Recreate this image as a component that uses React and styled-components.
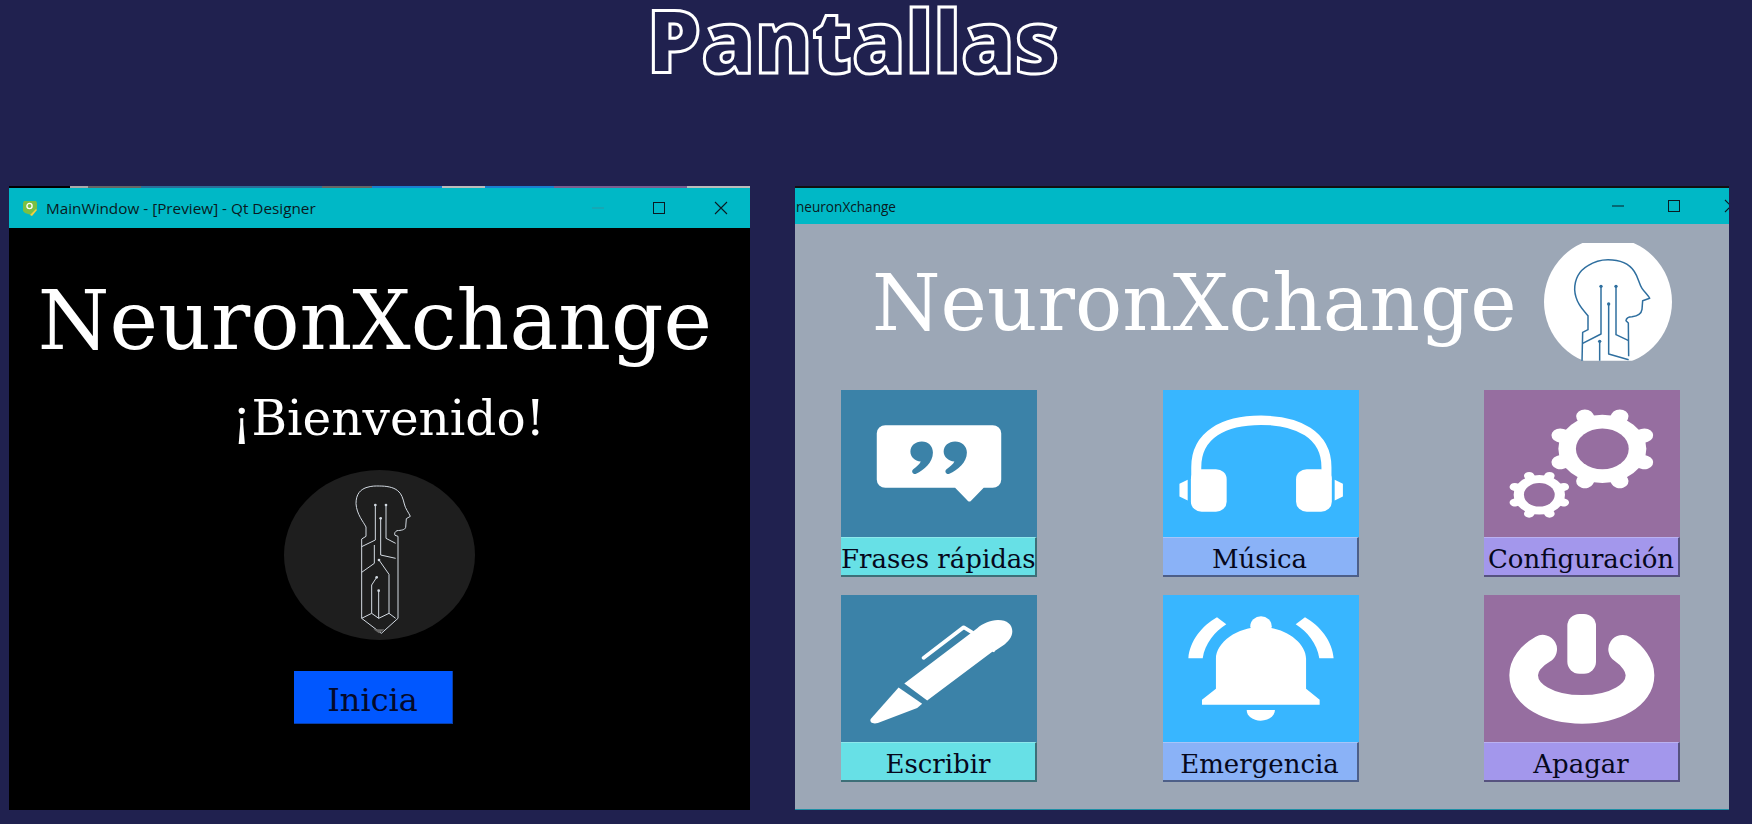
import React from "react";
import styled, { createGlobalStyle } from "styled-components";

const serif = `"DejaVu Serif", "Liberation Serif", serif`;

const GlobalStyle = createGlobalStyle`
  html, body {
    margin: 0;
    padding: 0;
    background: #20214f;
    overflow: hidden;
  }
`;

const Page = styled.div`
  width: 1752px;
  height: 824px;
  background: #20214f;
  display: flex;
  flex-direction: column;
  overflow: hidden;
`;

const Heading = styled.h1`
  margin: 0;
  height: 186px;
  padding-right: 46px;
  box-sizing: border-box;
  text-align: center;
  font-family: "Open Sans", "Noto Sans", sans-serif;
  font-weight: 800;
  font-size: 86px;
  line-height: 80px;
  color: #20214f;
  -webkit-text-stroke: 3px #fff;
`;

const Screens = styled.div`
  display: flex;
  gap: 45px;
  padding-left: 9px;
`;

const Window = styled.section`
  width: ${(p) => p.$width}px;
  height: 624px;
  display: flex;
  flex-direction: column;
  overflow: hidden;
  background: ${(p) => p.$bg};
  border-bottom: ${(p) => (p.$edge ? "1px solid #1f8fa6" : "none")};
  box-sizing: border-box;
`;

const TopStrip = styled.div`
  height: 2px;
  flex: none;
  background: ${(p) =>
    p.$busy
      ? `linear-gradient(90deg, #000 0 61px, #aaa 61px 79px, #666 79px 132px, #2a6f9a 132px 313px, #666 313px 363px, #1a7fd0 363px 433px, #bbb 433px 476px, #1a7fd0 476px 545px, #7a5f8f 545px 678px, #bbb 678px 741px)`
      : "#111"};
`;

const TitleBar = styled.header`
  height: ${(p) => p.$height}px;
  flex: none;
  background: #00b8c6;
  display: flex;
  align-items: center;
  font-family: "Open Sans", "Noto Sans", sans-serif;
  color: #0a1a22;
`;

const TitleText = styled.span`
  flex: 1;
  margin-left: ${(p) => p.$offset}px;
  font-size: ${(p) => p.$size}px;
  white-space: nowrap;
`;

const Controls = styled.div`
  display: flex;
  align-items: center;
  gap: ${(p) => p.$gap}px;
  margin-right: ${(p) => p.$right}px;
  flex: none;
`;

const WelcomeBody = styled.div`
  flex: 1;
  display: flex;
  flex-direction: column;
  align-items: center;
  color: #fff;
  font-family: ${serif};
`;

const BigTitle = styled.div`
  font-size: ${(p) => p.$size}px;
  line-height: 1;
  white-space: nowrap;
  color: #fff;
  font-family: ${serif};
`;

const WelcomeTitle = styled(BigTitle)`
  margin-top: 52px;
  margin-right: 9px;
`;

const BrandTitle = styled(BigTitle)`
  padding-top: 3px;
`;

const Greeting = styled.div`
  margin-top: 30px;
  margin-left: 18px;
  font-size: 48.5px;
  line-height: 52px;
`;

const LogoSlot = styled.div`
  margin-top: 26px;
  height: 170px;
`;

const StartButton = styled.button`
  margin-top: 31px;
  margin-right: 13px;
  width: 159px;
  height: 53px;
  border: none;
  border-right: 1px solid #0a3fa8;
  border-bottom: 1px solid #0a3fa8;
  background: #0057ff;
  color: #050a2a;
  font-family: ${serif};
  font-size: 32px;
  padding: 5px 0 0;
`;

const MenuBody = styled.div`
  flex: 1;
  display: flex;
  flex-direction: column;
  padding: 19px 49px 0 46px;
`;

const Brand = styled.div`
  display: flex;
  align-items: center;
  gap: 27px;
  height: 118px;
  margin-left: 31px;
  margin-bottom: 29px;
`;

const Grid = styled.div`
  display: grid;
  grid-template-columns: repeat(3, 196px);
  justify-content: space-between;
  row-gap: 18px;
`;

const Tile = styled.div`
  display: flex;
  flex-direction: column;
  height: 187px;
`;

const Art = styled.div`
  height: 147px;
  flex: none;
  background: ${(p) => p.$bg};
  svg {
    display: block;
  }
`;

const TileButton = styled.button`
  flex: 1;
  padding: 4px 0 0;
  border: none;
  border-right: 2px solid ${(p) => p.$edge};
  border-bottom: 2px solid ${(p) => p.$edge};
  border-top: 1px solid rgba(255, 255, 255, 0.25);
  background: ${(p) => p.$bg};
  color: #06081c;
  font-family: ${serif};
  font-size: 26px;
  line-height: 1;
  white-space: nowrap;
  overflow: hidden;
`;

function MinimizeIcon({ color = "#0a1a22" }) {
  return (
    <svg width="12" height="12" viewBox="0 0 12 12">
      <path d="M0 6h12" stroke={color} strokeWidth="1" />
    </svg>
  );
}

function MaximizeIcon() {
  return (
    <svg width="12" height="12" viewBox="0 0 12 12">
      <rect x="0.5" y="0.5" width="11" height="11" fill="none" stroke="#0a1a22" />
    </svg>
  );
}

function CloseIcon() {
  return (
    <svg width="14" height="14" viewBox="0 0 14 14">
      <path d="M1 1l12 12M13 1L1 13" stroke="#0a1a22" strokeWidth="1.1" />
    </svg>
  );
}

function QtIcon() {
  return (
    <svg width="18" height="18" viewBox="0 0 18 18" style={{ marginLeft: 12, flex: "none" }}>
      <path d="M3 2h12l1 2v6l-6 6-3-1-3-1-2-2V4z" fill="#7bc043" />
      <path d="M9 16l6-6 1 1-5 6z" fill="#f4d03f" />
      <circle cx="8.5" cy="7" r="2.6" fill="none" stroke="#fff" strokeWidth="1.3" />
    </svg>
  );
}

function TallLogo() {
  const s = "#d3dae2";
  return (
    <svg width="191" height="170" viewBox="72 65 573 510">
      <ellipse cx="358.5" cy="320" rx="286.5" ry="255" fill="#1e1e1e" />
      <g fill="none" stroke={s} strokeWidth="3" strokeLinejoin="round">
        <path d="M305 510V272l13-8v-28c-8-16-28-38-30-70 0-30 14-42 30-48 18-6 30-5 40-5 20 0 42 3 55 14 12 9 16 24 20 40 3 14 12 24 18 37l-12 7-2 26c-2 8-14 9-26 10-6 3-9 8-6 14l9 3v246l-50 45z" />
        <path d="M346 170v105l-41 20M378 170v100l29 15M362 210v110l45 10M343 290v55l-38 27" />
        <path d="M357 335l30 43v117l20 15M350 387l-15 23v85l-30 15M356 427v83M335 495l21 15 31-15" />
      </g>
      <g fill={s}>
        <circle cx="346" cy="170" r="4" />
        <circle cx="378" cy="170" r="4" />
        <circle cx="362" cy="210" r="4" />
        <circle cx="357" cy="335" r="4" />
        <circle cx="350" cy="387" r="4" />
        <circle cx="356" cy="427" r="4" />
      </g>
      <path d="M340 543h34l-17 12z" fill="#666" />
    </svg>
  );
}

function HeadLogo() {
  const s = "#2f6f9f";
  return (
    <svg width="128" height="118" viewBox="186 222 384 354">
      <defs>
        <clipPath id="head-cut">
          <rect x="186" y="222" width="384" height="353" />
        </clipPath>
      </defs>
      <g clipPath="url(#head-cut)">
        <circle cx="378" cy="398" r="192" fill="#fff" />
        <g fill="none" stroke={s} strokeWidth="4.5" strokeLinejoin="round">
          <path d="M300 580l2-90 16-8v-42c-14-16-38-40-40-78 0-32 16-58 40-72 18-12 40-18 60-18 30 0 62 10 78 34 14 20 14 38 24 52 8 12 20 22 23 30l-21 7-2 26c-2 14-14 20-30 22-8 0-17 4-18 12l7 7 1 100" />
          <path d="M357 352v143l-55 28M402 352v145l38 18M380 405v150l60 17M353 517v60" />
        </g>
        <g fill={s}>
          <circle cx="357" cy="352" r="5" />
          <circle cx="402" cy="352" r="5" />
          <circle cx="380" cy="405" r="5" />
          <circle cx="353" cy="517" r="5" />
        </g>
      </g>
    </svg>
  );
}

function IconFrame({ box, children }) {
  return (
    <svg width="196" height="147" viewBox={box} preserveAspectRatio="none" fill="#fff">
      {children}
    </svg>
  );
}

function QuoteIcon() {
  return (
    <IconFrame box="59 30 548 442">
      <path d="M183 136h300a24 24 0 0 1 24 24v140a24 24 0 0 1-24 24h-25l-36 40q-4 3-8 0l-36-40H183a24 24 0 0 1-24-24V160a24 24 0 0 1 24-24z" />
      <g fill="#3b82a8">
        <path d="M285 185c18 0 31 14 31 33 0 30-25 53-47 64-9 3-15-8-8-14 10-8 18-15 21-23-17-1-29-14-29-30 0-17 14-30 32-30z" />
        <path d="M378 185c18 0 33 14 33 33 0 30-26 53-49 64-9 3-15-8-8-14 10-8 19-15 22-23-17-1-30-14-30-30 0-17 14-30 32-30z" />
      </g>
    </IconFrame>
  );
}

function HeadphonesIcon() {
  return (
    <IconFrame box="959 30 548 442">
      <path
        d="M1052 300V262c0-98 78-141 181-141s183 43 183 141v38"
        fill="none"
        stroke="#fff"
        strokeWidth="28"
      />
      <rect x="1037" y="268" width="100" height="128" rx="30" />
      <rect x="1331" y="268" width="100" height="128" rx="30" />
      <path d="M1005 312l23-12v62l-23-12zM1462 312l-23-12v62l23-12z" />
    </IconFrame>
  );
}

function Gear({ x, y, sx, sy }) {
  const teeth = [22.5, 67.5, 112.5, 157.5, 202.5, 247.5, 292.5, 337.5];
  return (
    <g transform={`translate(${x} ${y}) scale(${sx} ${sy})`}>
      {teeth.map((a) => (
        <line
          key={a}
          x1="0"
          y1="0"
          x2="114"
          y2="0"
          stroke="#fff"
          strokeWidth="44"
          strokeLinecap="round"
          transform={`rotate(${a})`}
        />
      ))}
      <circle r="110" />
      <circle r="66" fill="#966ea0" />
    </g>
  );
}

function GearsIcon() {
  return (
    <IconFrame box="72 30 588 442">
      <Gear x={427} y={207} sx={1.2} sy={0.93} />
      <Gear x={238} y={345} sx={0.7} sy={0.54} />
    </IconFrame>
  );
}

function PenIcon() {
  return (
    <IconFrame box="59 30 548 442">
      <path d="M236 296L440 130c14-14 36-25 58-25 26 0 40 14 40 34 0 18-12 32-26 43l-22 16-3 4-5-1-182 146z" />
      <path d="M290 219L402 127l24 16" fill="none" stroke="#fff" strokeWidth="11" strokeLinecap="round" strokeLinejoin="round" />
      <path d="M220 308l66 49-14 13-110 45c-14 4-24-2-20-12z" />
    </IconFrame>
  );
}

function BellIcon() {
  return (
    <IconFrame box="959 30 548 442">
      <circle cx="1233" cy="124" r="30" />
      <path d="M1107 222c0-50 60-96 126-96s126 46 126 96v90l38 33v15h-329v-15l39-33z" />
      <path d="M1193 376h79c0 18-18 32-40 32s-39-14-39-32z" />
      <path d="M1030 220c3-50 38-98 80-123l26 21c-32 22-60 58-66 102z" />
      <path d="M1436 220c-3-50-38-98-80-123l-26 21c32 22 60 58 66 102z" />
    </IconFrame>
  );
}

function PowerIcon() {
  return (
    <IconFrame box="72 645 588 442">
      <rect x="322" y="702" width="86" height="180" rx="36" />
      <path
        d="M248 808c-36 20-57 50-57 78 0 60 76 103 175 103s174-43 174-103c0-28-22-58-52-78"
        fill="none"
        stroke="#fff"
        strokeWidth="86"
        strokeLinecap="round"
      />
    </IconFrame>
  );
}

const tiles = [
  { label: "Frases rápidas", Icon: QuoteIcon, art: "#3b82a8", bg: "#67e0e6", edge: "#3d6f78" },
  { label: "Música", Icon: HeadphonesIcon, art: "#38b6ff", bg: "#8ab2f7", edge: "#4d5f88" },
  { label: "Configuración", Icon: GearsIcon, art: "#966ea0", bg: "#a397ec", edge: "#56527f" },
  { label: "Escribir", Icon: PenIcon, art: "#3b82a8", bg: "#67e0e6", edge: "#3d6f78" },
  { label: "Emergencia", Icon: BellIcon, art: "#38b6ff", bg: "#8ab2f7", edge: "#4d5f88" },
  { label: "Apagar", Icon: PowerIcon, art: "#966ea0", bg: "#a397ec", edge: "#56527f" },
];

export default function App() {
  return (
    <Page>
      <GlobalStyle />
      <Heading>Pantallas</Heading>
      <Screens>
        <Window $width={741} $bg="#000">
          <TopStrip $busy />
          <TitleBar $height={40}>
            <QtIcon />
            <TitleText $offset={7} $size={15.3}>MainWindow - [Preview] - Qt Designer</TitleText>
            <Controls $gap={49} $right={22}>
              <MinimizeIcon color="#2a98a4" />
              <MaximizeIcon />
              <CloseIcon />
            </Controls>
          </TitleBar>
          <WelcomeBody>
            <WelcomeTitle $size={82}>NeuronXchange</WelcomeTitle>
            <Greeting>¡Bienvenido!</Greeting>
            <LogoSlot>
              <TallLogo />
            </LogoSlot>
            <StartButton>Inicia</StartButton>
          </WelcomeBody>
        </Window>
        <Window $width={934} $bg="#9ca7b6" $edge>
          <TopStrip />
          <TitleBar $height={36}>
            <TitleText $offset={1} $size={13.6}>neuronXchange</TitleText>
            <Controls $gap={44} $right={-9}>
              <MinimizeIcon />
              <MaximizeIcon />
              <CloseIcon />
            </Controls>
          </TitleBar>
          <MenuBody>
            <Brand>
              <BrandTitle $size={78.4}>NeuronXchange</BrandTitle>
              <HeadLogo />
            </Brand>
            <Grid>
              {tiles.map(({ label, Icon, art, bg, edge }) => (
                <Tile key={label}>
                  <Art $bg={art}>
                    <Icon />
                  </Art>
                  <TileButton $bg={bg} $edge={edge}>
                    {label}
                  </TileButton>
                </Tile>
              ))}
            </Grid>
          </MenuBody>
        </Window>
      </Screens>
    </Page>
  );
}
